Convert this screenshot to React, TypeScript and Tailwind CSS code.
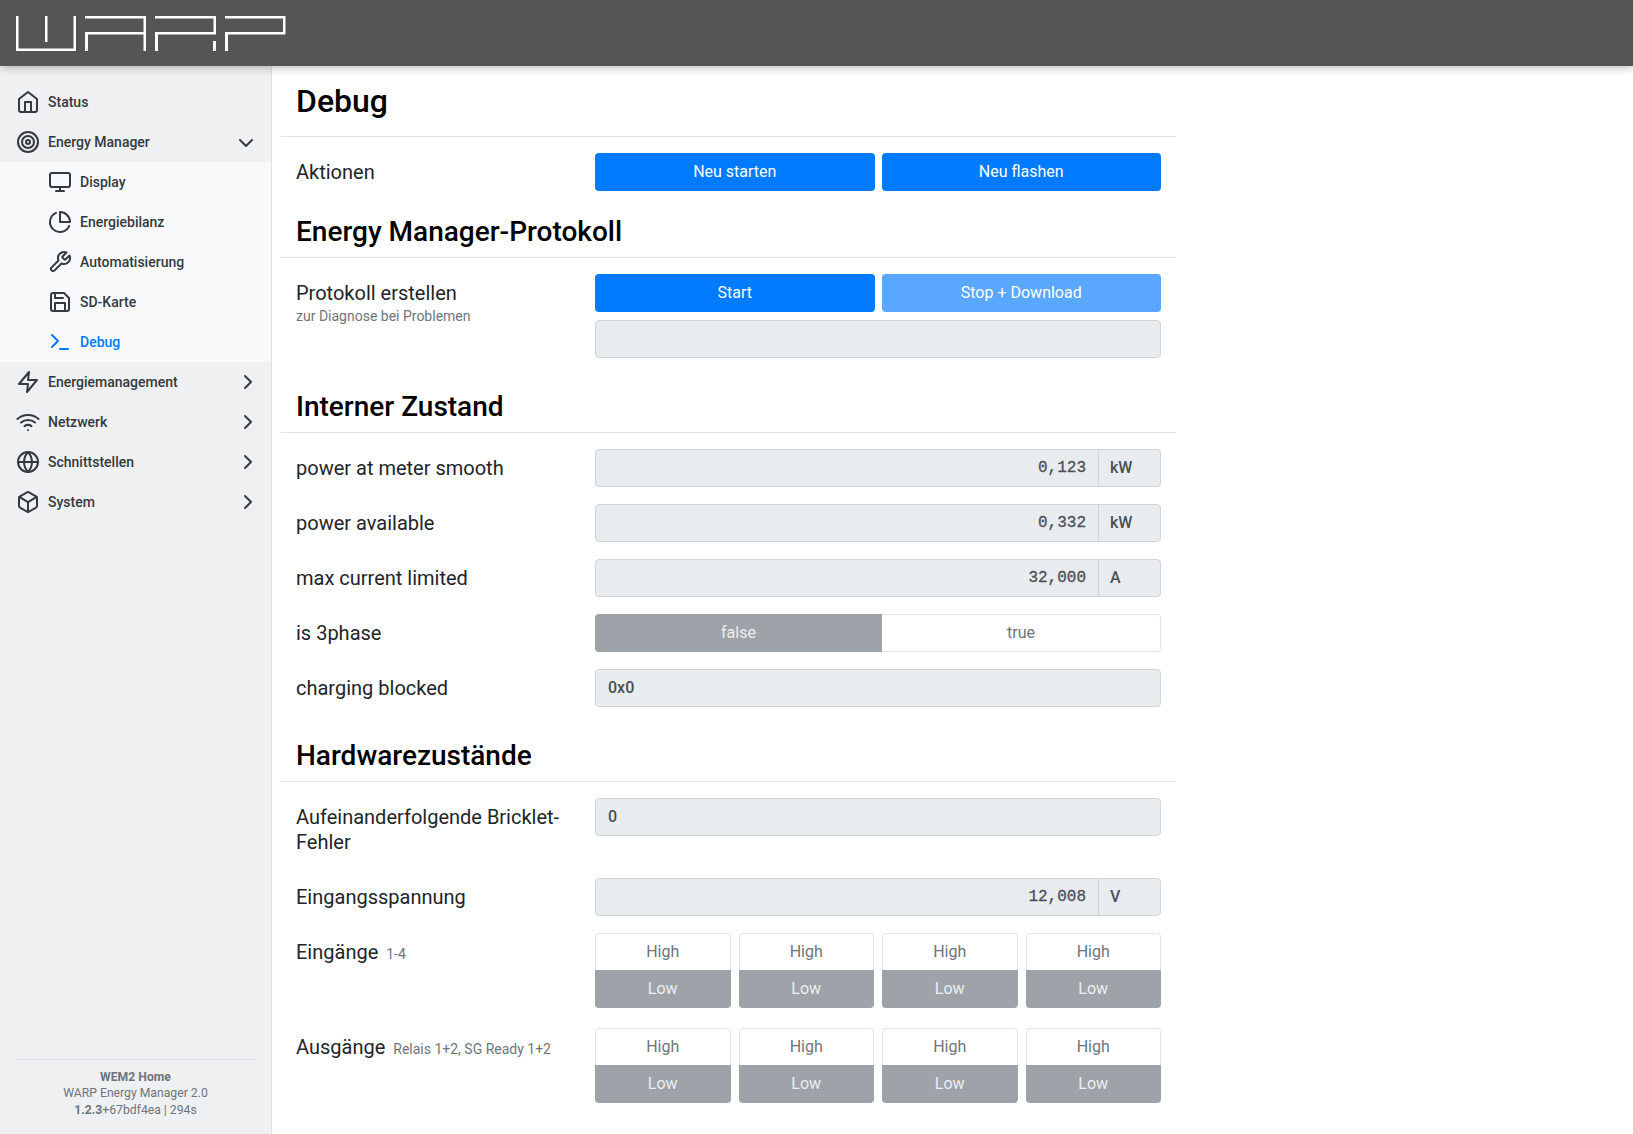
import { FiHome, FiTarget, FiMonitor, FiPieChart, FiTool, FiSave, FiTerminal, FiZap, FiWifi, FiGlobe, FiBox, FiChevronDown, FiChevronRight } from 'react-icons/fi';
import type { IconType } from 'react-icons';
import type { ReactNode } from 'react';

const Logo = () => (
    <svg width="300" height="66" viewBox="0 0 300 66" fill="#fff">
        {/* W */}
        <rect x="16" y="16" width="2.5" height="35" />
        <rect x="16" y="48.5" width="60" height="2.5" />
        <rect x="45" y="16" width="2.5" height="26" />
        <rect x="73.5" y="16" width="2.5" height="35" />
        {/* A */}
        <rect x="85" y="16" width="61" height="2.5" />
        <rect x="85" y="32" width="61" height="2.5" />
        <rect x="85" y="32" width="3" height="19" />
        <rect x="143.5" y="16" width="2.5" height="35" />
        {/* R */}
        <rect x="155" y="16" width="61" height="2.5" />
        <rect x="155" y="32" width="61" height="2.5" />
        <rect x="155" y="32" width="3" height="19" />
        <rect x="213.5" y="16" width="2.5" height="18" />
        <rect x="213" y="41" width="3" height="10" />
        {/* P */}
        <rect x="225" y="16" width="60" height="2.5" />
        <rect x="225" y="32" width="60" height="2.5" />
        <rect x="225" y="32" width="3" height="19" />
        <rect x="283" y="16" width="2.5" height="18" />
    </svg>
);

const NavItem = ({ icon: Icon, label, sub, active, chevron }: { icon: IconType; label: string; sub?: boolean; active?: boolean; chevron?: 'down' | 'right' }) => (
    <div className={`flex h-10 items-center text-sm font-medium ${sub ? 'pl-12' : 'pl-4'} ${active ? 'text-[#007bff]' : 'text-[#343a40]'}`}>
        <Icon size={24} strokeWidth={2} className="mr-2 shrink-0" />
        <span>{label}</span>
        {chevron === 'down' && <FiChevronDown size={24} className="mt-0.5 ml-auto mr-[13px]" />}
        {chevron === 'right' && <FiChevronRight size={24} className="ml-auto mr-[11px]" />}
    </div>
);

const Sidebar = () => (
    <aside className="flex w-[272px] shrink-0 flex-col border-r border-[#dfe0e2] bg-[#eff0f2]">
        <nav className="pt-4">
            <NavItem icon={FiHome} label="Status" />
            <NavItem icon={FiTarget} label="Energy Manager" chevron="down" />
            <div className="bg-[#f8f9fb]">
                <NavItem icon={FiMonitor} label="Display" sub />
                <NavItem icon={FiPieChart} label="Energiebilanz" sub />
                <NavItem icon={FiTool} label="Automatisierung" sub />
                <NavItem icon={FiSave} label="SD-Karte" sub />
                <NavItem icon={FiTerminal} label="Debug" sub active />
            </div>
            <NavItem icon={FiZap} label="Energiemanagement" chevron="right" />
            <NavItem icon={FiWifi} label="Netzwerk" chevron="right" />
            <NavItem icon={FiGlobe} label="Schnittstellen" chevron="right" />
            <NavItem icon={FiBox} label="System" chevron="right" />
        </nav>
        <div className="mx-4 mt-auto mb-4 border-t border-[#dcdde0] pt-[9px] text-center text-[12.2px] leading-[16.5px] text-[#6c757d]">
            <div className="font-bold">WEM2 Home</div>
            <div>WARP Energy Manager 2.0</div>
            <div><b>1.2.3</b>+67bdf4ea | 294s</div>
        </div>
    </aside>
);

const Heading = ({ children, first }: { children: ReactNode; first?: boolean }) => (
    <div className={`-mx-[15px] mb-4 border-b border-[#dee2e6] px-[15px] ${first ? 'pt-3 pb-3' : 'pt-1 pb-[5px]'}`}>
        <h2 className={`font-medium text-black ${first ? 'text-[32px] leading-[46px]' : 'text-[28px] leading-[40px]'}`}>{children}</h2>
    </div>
);

const Row = ({ label, children }: { label: ReactNode; children: ReactNode }) => (
    <div className="mb-[17px] flex">
        <div className="w-[299px] shrink-0 pt-[7px] pr-[15px] text-xl leading-[25px] text-[#212529]">{label}</div>
        <div className="min-w-0 flex-1">{children}</div>
    </div>
);

const Button = ({ children, faded }: { children: ReactNode; faded?: boolean }) => (
    <div className={`flex h-[38px] flex-1 items-center justify-center rounded-[4px] text-base text-white ${faded ? 'bg-[#5aa7ff]' : 'bg-[#007bff]'}`}>{children}</div>
);

const Output = ({ value, unit }: { value: string; unit: string }) => (
    <div className="flex h-[38px] rounded-[4px] border border-[#ced4da] bg-[#e9ecef]">
        <div className="flex-1 self-center pr-3 text-right font-['Liberation_Mono',monospace] text-base text-[#495057] [-webkit-text-stroke:0.3px]">{value}</div>
        <div className="flex w-[62px] items-center border-l border-[#ced4da] pl-[11px] text-base font-medium text-[#495057]">{unit}</div>
    </div>
);

const Plain = ({ children }: { children?: ReactNode }) => (
    <div className="flex h-[38px] items-center rounded-[4px] border border-[#ced4da] bg-[#e9ecef] px-3 text-base font-medium text-[#495057]">{children}</div>
);

const HighLow = () => (
    <div className="flex-1 text-center text-base">
        <div className="h-[37px] rounded-t-[4px] border border-b-0 border-[#e3e5e8] bg-white leading-[35px] text-[#6c757d]">High</div>
        <div className="h-[38px] rounded-b-[4px] bg-[#9ea3a9] leading-[37px] text-[#eceef0]">Low</div>
    </div>
);

const HighLowRow = () => (
    <div className="flex gap-2">
        <HighLow />
        <HighLow />
        <HighLow />
        <HighLow />
    </div>
);

export default function App() {
    return (
        <div className="flex h-screen flex-col overflow-hidden bg-white font-['Roboto',sans-serif]">
            <header className="z-10 h-[66px] shrink-0 bg-[#555555] shadow-[0_2px_8px_rgba(0,0,0,0.25)]">
                <Logo />
            </header>
            <div className="flex min-h-0 flex-1">
                <Sidebar />
                <main className="ml-[9px] w-[895px] px-[15px]">
                    <Heading first>Debug</Heading>
                    <Row label="Aktionen">
                        <div className="flex gap-[7px]">
                            <Button>Neu starten</Button>
                            <Button>Neu flashen</Button>
                        </div>
                    </Row>

                    <Heading>Energy Manager-Protokoll</Heading>
                    <div className="pb-2">
                        <Row label={<>Protokoll erstellen<div className="text-sm leading-[20px] text-[#6c757d]">zur Diagnose bei Problemen</div></>}>
                            <div className="mb-2 flex gap-[7px]">
                                <Button>Start</Button>
                                <Button faded>Stop + Download</Button>
                            </div>
                            <Plain />
                        </Row>
                    </div>

                    <Heading>Interner Zustand</Heading>
                    <Row label="power at meter smooth"><Output value="0,123" unit="kW" /></Row>
                    <Row label="power available"><Output value="0,332" unit="kW" /></Row>
                    <Row label="max current limited"><Output value="32,000" unit="A" /></Row>
                    <Row label="is 3phase">
                        <div className="flex h-[38px] text-base">
                            <div className="flex w-[287px] items-center justify-center rounded-l-[4px] bg-[#9ea3a9] text-[#eceef0]">false</div>
                            <div className="flex flex-1 items-center justify-center rounded-r-[4px] border border-l-0 border-[#e3e5e8] text-[#6c757d]">true</div>
                        </div>
                    </Row>
                    <div className="pb-2">
                        <Row label="charging blocked"><Plain>0x0</Plain></Row>
                    </div>

                    <Heading>Hardwarezustände</Heading>
                    <div className="pb-[6px]">
                        <Row label="Aufeinanderfolgende Bricklet-Fehler"><Plain>0</Plain></Row>
                    </div>
                    <Row label="Eingangsspannung"><Output value="12,008" unit="V" /></Row>
                    <div className="mb-5">
                        <Row label={<>Eingänge <span className="ml-[3px] text-sm text-[#6c757d]">1-4</span></>}><HighLowRow /></Row>
                    </div>
                    <Row label={<>Ausgänge <span className="ml-[3px] text-sm text-[#6c757d]">Relais 1+2, SG Ready 1+2</span></>}><HighLowRow /></Row>
                </main>
            </div>
        </div>
    );
}
